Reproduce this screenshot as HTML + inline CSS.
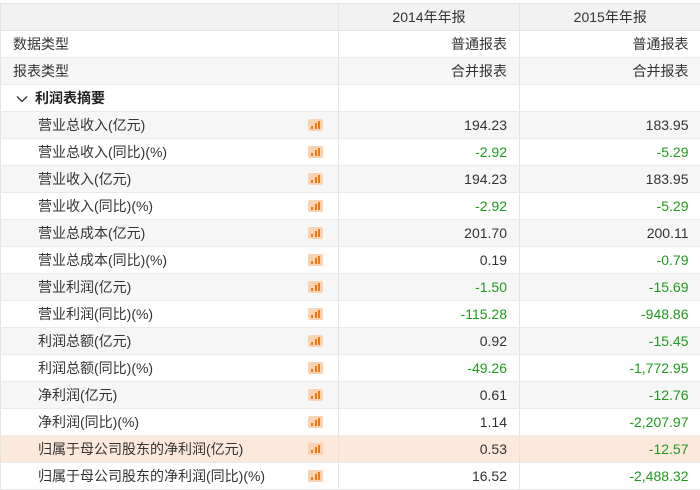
<!DOCTYPE html>
<html><head><meta charset="utf-8"><style>
body{margin:0;background:#fff;font-family:"Liberation Sans","Noto Sans CJK SC",sans-serif;font-size:14px;color:#333}
table{border-collapse:collapse;position:absolute;top:3px;left:0;width:700px;table-layout:fixed}
td{height:26px;padding:0;border-bottom:1px solid #eaeaea;border-left:1px solid #e3e3e3;white-space:nowrap;overflow:hidden}
tr.h td{height:26px;background:#f2f2f2;text-align:center;border-top:1px solid #e3e3e3;border-bottom:1px solid #e3e3e3}
td.n{text-align:right;padding-right:12px}
td.l{padding-left:12px;position:relative}
td.i{padding-left:37px;position:relative}
tr.g td{background:#f6f6f6}
tr.hl td{background:#fde9dc}
.gr{color:#1f9a1f}
.ic{position:absolute;left:307px;top:7px;width:15px;height:12px;background:#fbd3b4;border-radius:2px}
.ic i{position:absolute;bottom:2px;width:2px;background:#f07a12}
b{font-weight:bold;color:#222}
</style></head><body>
<table>
<colgroup><col style="width:338px"><col style="width:181px"><col style="width:181px"></colgroup>
<tr class="h"><td></td><td>2014年年报</td><td>2015年年报</td></tr>
<tr><td class="l">数据类型</td><td class="n">普通报表</td><td class="n">普通报表</td></tr>
<tr class="g"><td class="l">报表类型</td><td class="n">合并报表</td><td class="n">合并报表</td></tr>
<tr><td class="l"><svg width="12" height="8" viewBox="0 0 12 8" style="margin:0 7px 1px 3px;vertical-align:middle"><path d="M1 1.5L6 6.5L11 1.5" fill="none" stroke="#333" stroke-width="1.3"/></svg><b>利润表摘要</b></td><td></td><td></td></tr>
<tr class="g"><td class="i">营业总收入(亿元)<span class="ic"><i style="left:3px;height:3px"></i><i style="left:7px;height:6px"></i><i style="left:10px;height:8px"></i></span></td><td class="n">194.23</td><td class="n">183.95</td></tr>
<tr><td class="i">营业总收入(同比)(%)<span class="ic"><i style="left:3px;height:3px"></i><i style="left:7px;height:6px"></i><i style="left:10px;height:8px"></i></span></td><td class="n gr">-2.92</td><td class="n gr">-5.29</td></tr>
<tr class="g"><td class="i">营业收入(亿元)<span class="ic"><i style="left:3px;height:3px"></i><i style="left:7px;height:6px"></i><i style="left:10px;height:8px"></i></span></td><td class="n">194.23</td><td class="n">183.95</td></tr>
<tr><td class="i">营业收入(同比)(%)<span class="ic"><i style="left:3px;height:3px"></i><i style="left:7px;height:6px"></i><i style="left:10px;height:8px"></i></span></td><td class="n gr">-2.92</td><td class="n gr">-5.29</td></tr>
<tr class="g"><td class="i">营业总成本(亿元)<span class="ic"><i style="left:3px;height:3px"></i><i style="left:7px;height:6px"></i><i style="left:10px;height:8px"></i></span></td><td class="n">201.70</td><td class="n">200.11</td></tr>
<tr><td class="i">营业总成本(同比)(%)<span class="ic"><i style="left:3px;height:3px"></i><i style="left:7px;height:6px"></i><i style="left:10px;height:8px"></i></span></td><td class="n">0.19</td><td class="n gr">-0.79</td></tr>
<tr class="g"><td class="i">营业利润(亿元)<span class="ic"><i style="left:3px;height:3px"></i><i style="left:7px;height:6px"></i><i style="left:10px;height:8px"></i></span></td><td class="n gr">-1.50</td><td class="n gr">-15.69</td></tr>
<tr><td class="i">营业利润(同比)(%)<span class="ic"><i style="left:3px;height:3px"></i><i style="left:7px;height:6px"></i><i style="left:10px;height:8px"></i></span></td><td class="n gr">-115.28</td><td class="n gr">-948.86</td></tr>
<tr class="g"><td class="i">利润总额(亿元)<span class="ic"><i style="left:3px;height:3px"></i><i style="left:7px;height:6px"></i><i style="left:10px;height:8px"></i></span></td><td class="n">0.92</td><td class="n gr">-15.45</td></tr>
<tr><td class="i">利润总额(同比)(%)<span class="ic"><i style="left:3px;height:3px"></i><i style="left:7px;height:6px"></i><i style="left:10px;height:8px"></i></span></td><td class="n gr">-49.26</td><td class="n gr">-1,772.95</td></tr>
<tr class="g"><td class="i">净利润(亿元)<span class="ic"><i style="left:3px;height:3px"></i><i style="left:7px;height:6px"></i><i style="left:10px;height:8px"></i></span></td><td class="n">0.61</td><td class="n gr">-12.76</td></tr>
<tr><td class="i">净利润(同比)(%)<span class="ic"><i style="left:3px;height:3px"></i><i style="left:7px;height:6px"></i><i style="left:10px;height:8px"></i></span></td><td class="n">1.14</td><td class="n gr">-2,207.97</td></tr>
<tr class="hl"><td class="i">归属于母公司股东的净利润(亿元)<span class="ic"><i style="left:3px;height:3px"></i><i style="left:7px;height:6px"></i><i style="left:10px;height:8px"></i></span></td><td class="n">0.53</td><td class="n gr">-12.57</td></tr>
<tr><td class="i">归属于母公司股东的净利润(同比)(%)<span class="ic"><i style="left:3px;height:3px"></i><i style="left:7px;height:6px"></i><i style="left:10px;height:8px"></i></span></td><td class="n">16.52</td><td class="n gr">-2,488.32</td></tr>
</table>
</body></html>
